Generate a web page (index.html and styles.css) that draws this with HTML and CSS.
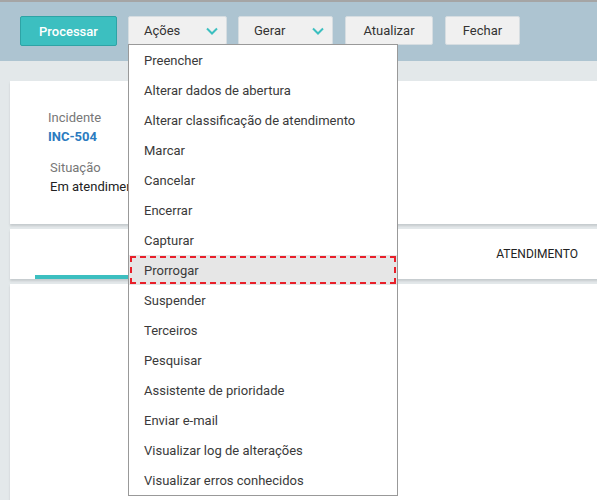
FILE: index.html
```html
<!DOCTYPE html>
<html lang="pt">
<head>
    <meta charset="UTF-8">
    <title>Incidente</title>
    <link rel="stylesheet" href="styles.css">
</head>
<body>
<div class="toolbar">
    <button class="btn primary">Processar</button>
    <div class="drop">
        <button class="btn select">Ações
            <svg width="12" height="8" viewBox="0 0 12 8"><path d="M1 1.5 6 6.5 11 1.5" fill="none" stroke="#3cbfc0" stroke-width="2"/></svg>
        </button>
        <ul class="menu">
            <li>Preencher</li>
            <li>Alterar dados de abertura</li>
            <li>Alterar classificação de atendimento</li>
            <li>Marcar</li>
            <li>Cancelar</li>
            <li>Encerrar</li>
            <li>Capturar</li>
            <li class="focus">Prorrogar</li>
            <li>Suspender</li>
            <li>Terceiros</li>
            <li>Pesquisar</li>
            <li>Assistente de prioridade</li>
            <li>Enviar e-mail</li>
            <li>Visualizar log de alterações</li>
            <li>Visualizar erros conhecidos</li>
        </ul>
    </div>
    <button class="btn select gerar">Gerar
        <svg width="12" height="8" viewBox="0 0 12 8"><path d="M1 1.5 6 6.5 11 1.5" fill="none" stroke="#3cbfc0" stroke-width="2"/></svg>
    </button>
    <button class="btn atualizar">Atualizar</button>
    <button class="btn fechar">Fechar</button>
</div>
<div class="content">
    <div class="card info">
        <div class="label">Incidente</div>
        <div class="code">INC-504</div>
        <div class="label sit">Situação</div>
        <div class="value">Em atendimento</div>
    </div>
    <div class="card tabs">
        <div class="tab active"></div>
        <div class="tab right">ATENDIMENTO</div>
    </div>
    <div class="card body"></div>
</div>
</body>
</html>
```
FILE: styles.css
```css
*{
    margin: 0;
    padding: 0;
    list-style: none;
    box-sizing: border-box;
}
body{
    font-family: Roboto, "Liberation Sans", sans-serif;
    font-size: 13px;
    color: #333;
    background-color: #e3e8ea;
    overflow: hidden;
    height: 500px;
}
.toolbar{
    height: 61px;
    background-color: #adc4d1;
    border-top: 2px solid #a5a5a5;
    display: flex;
    align-items: flex-start;
    padding: 14px 0 0 20px;
    position: relative;
    z-index: 2;
}
.btn{
    height: 29px;
    font-family: inherit;
    font-size: 13px;
    color: #333;
    background-color: #f0f0f0;
    border: 1px solid #d6dde1;
    border-radius: 2px;
    margin-right: 11px;
    padding: 0 15px;
    display: flex;
    align-items: center;
}
.primary{
    width: 97px;
    height: 30px;
    background-color: #3cbfc0;
    border-color: #2ea3a5;
    color: #fff;
    font-weight: 500;
    justify-content: center;
}
.select{
    justify-content: space-between;
    width: 99px;
    padding-right: 8px;
}
.gerar{
    width: 95px;
    margin-right: 12px;
}
.atualizar{
    width: 88px;
    margin-right: 12px;
    justify-content: center;
}
.fechar{
    width: 75px;
    justify-content: center;
}
.drop{
    position: relative;
    margin-right: 11px;
}
.drop .btn{
    margin-right: 0;
}
.menu{
    position: absolute;
    top: 28px;
    left: 0;
    width: 270px;
    background-color: #fff;
    border: 1px solid #999;
}
.menu li{
    height: 30px;
    line-height: 30px;
    padding: 1px 0 0 15px;
    color: #3a3a3a;
    white-space: nowrap;
}
.menu li.focus{
    background-color: #e6e6e6;
    outline: 2px dashed #e8202a;
    outline-offset: -3px;
}
.content{
    padding: 20px 0 0 10px;
    margin-right: -20px;
}
.card{
    background-color: #fff;
    box-shadow: 0 2px 2px #c6cbce;
    margin-bottom: 5px;
}
.info{
    height: 143px;
    padding: 29px 0 0 38px;
}
.label{
    color: #777;
    line-height: 16px;
}
.code{
    color: #2b7bc0;
    font-weight: bold;
    line-height: 22px;
}
.sit{
    margin: 11px 0 0 2px;
    line-height: 18px;
}
.value{
    color: #222;
    line-height: 20px;
    margin-left: 2px;
}
.tabs{
    height: 50px;
    display: flex;
    align-items: flex-end;
    justify-content: space-between;
    padding: 0 20px 0 25px;
}
.tab.active{
    width: 160px;
    height: 4px;
    background-color: #3cbfc0;
}
.tab.right{
    align-self: center;
    font-size: 12px;
    color: #222;
    padding-right: 19px;
}
.body{
    height: 216px;
    margin-bottom: 0;
}
```
